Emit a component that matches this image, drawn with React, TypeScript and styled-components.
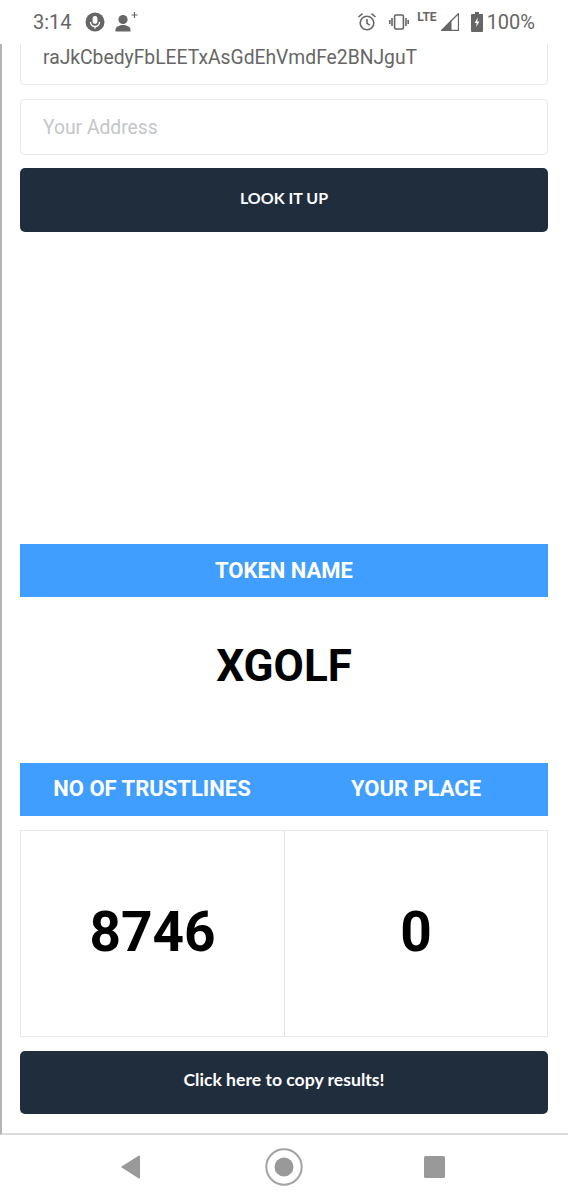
import React from "react";
import styled, { createGlobalStyle } from "styled-components";

const GlobalStyle = createGlobalStyle`
  html, body {
    margin: 0;
    padding: 0;
    background: #fff;
    font-family: Roboto, "Liberation Sans", sans-serif;
  }
  * { box-sizing: border-box; }
`;

const App: React.FC = () => {
  return (
    <Screen>
      <GlobalStyle />
      <StatusBar>
        <StatusGroup>
          <Clock>3:14</Clock>
          <svg width="20" height="20" viewBox="0 0 20 20">
            <circle cx="10" cy="10" r="9.5" fill="#666" />
            <rect x="7.6" y="4" width="4.8" height="8" rx="2.4" fill="#fff" />
            <path d="M5.5 10a4.5 4.5 0 0 0 9 0" fill="none" stroke="#fff" strokeWidth="1.4" />
            <rect x="9.3" y="14" width="1.4" height="2.5" fill="#fff" />
          </svg>
          <svg width="24" height="22" viewBox="0 0 24 22">
            <circle cx="8" cy="8.5" r="4.6" fill="#666" />
            <path d="M0.5 20.5v-2c0-3 4.5-4.6 7.5-4.6s7.5 1.6 7.5 4.6v2z" fill="#666" />
            <path d="M19.5 1v6M16.5 4h6" stroke="#666" strokeWidth="1.2" />
          </svg>
        </StatusGroup>
        <StatusGroup $right>
          <svg width="20" height="20" viewBox="0 0 20 20" fill="none" stroke="#666" strokeWidth="1.6">
            <circle cx="10" cy="11" r="6.8" />
            <path d="M10 7v4.3l2.8 1.9M1.5 5l4-3.4M18.5 5l-4-3.4" />
          </svg>
          <svg width="20" height="16" viewBox="0 0 20 16" fill="none" stroke="#666" strokeWidth="1.6">
            <rect x="5.6" y="1" width="8.8" height="14" rx="1.2" />
            <path d="M3 4v8M17 4v8M0.8 6v4M19.2 6v4" />
          </svg>
          <SignalGroup>
            <LteLabel>LTE</LteLabel>
            <svg width="18" height="18" viewBox="0 0 18 18">
              <path d="M0.5 17.5L17.5 0.5v17z" fill="none" stroke="#666" strokeWidth="1.3" />
              <path d="M0.5 17.5L10.5 7.5v10z" fill="#666" />
            </svg>
          </SignalGroup>
          <svg width="12" height="20" viewBox="0 0 12 20">
            <path d="M4 0h4v2h3a1 1 0 0 1 1 1v16a1 1 0 0 1-1 1H1a1 1 0 0 1-1-1V3a1 1 0 0 1 1-1h3z" fill="#666" />
            <path d="M6.8 5.5L3.6 11h2.1l-.5 4 3.2-5.6H6.3z" fill="#fff" />
          </svg>
          <Battery>100%</Battery>
        </StatusGroup>
      </StatusBar>

      <Viewport>
        <Form>
          <Input value="raJkCbedyFbLEETxAsGdEhVmdFe2BNJguT" readOnly />
          <Input placeholder="Your Address" />
          <LookButton>LOOK IT UP</LookButton>
        </Form>

        <Results>
          <HeaderBar>
            <HeaderCell>TOKEN NAME</HeaderCell>
          </HeaderBar>
          <TokenName>XGOLF</TokenName>
          <HeaderBar>
            <HeaderCell $lift>NO OF TRUSTLINES</HeaderCell>
            <HeaderCell $lift>YOUR PLACE</HeaderCell>
          </HeaderBar>
          <StatsGrid>
            <StatCell>8746</StatCell>
            <StatCell>0</StatCell>
          </StatsGrid>
          <CopyButton>Click here to copy results!</CopyButton>
        </Results>
      </Viewport>

      <NavBar>
        <BackIcon width="20" height="24" viewBox="0 0 20 24">
          <path d="M19 1.5v21a1 1 0 0 1-1.5.8L1 12.8a1 1 0 0 1 0-1.6L17.5.7a1 1 0 0 1 1.5.8z" fill="#999" />
        </BackIcon>
        <svg width="38" height="38" viewBox="0 0 38 38">
          <circle cx="19" cy="19" r="17.7" fill="none" stroke="#a3a3a3" strokeWidth="2" />
          <circle cx="19" cy="19" r="9.5" fill="#999" />
        </svg>
        <RecentsIcon width="21" height="22" viewBox="0 0 21 22">
          <rect width="21" height="22" rx="1.5" fill="#999" />
        </RecentsIcon>
      </NavBar>
    </Screen>
  );
};

export default App;

const Screen = styled.div`
  width: 568px;
  height: 1200px;
  display: flex;
  flex-direction: column;
  background: #fff;
  overflow: hidden;
`;

const StatusBar = styled.div`
  height: 44px;
  flex: none;
  display: flex;
  align-items: center;
  justify-content: space-between;
  padding: 0 33px 0 33px;
  color: #666;
`;

const StatusGroup = styled.div<{ $right?: boolean }>`
  display: flex;
  align-items: center;
  gap: ${(props) => (props.$right ? "12px" : "10px")};
`;

const Clock = styled.span`
  font-size: 20px;
  margin-right: 3px;
`;

const SignalGroup = styled.div`
  display: flex;
  align-items: flex-start;
  gap: 4px;
  margin-left: -4px;
`;

const LteLabel = styled.span`
  font-size: 12px;
  font-weight: 700;
  line-height: 12px;
  margin-top: -2px;
`;

const Battery = styled.span`
  font-size: 20px;
  margin-left: -8px;
`;

const Viewport = styled.div`
  height: 1091px;
  flex: none;
  border-left: 2px solid #b4b4b4;
  border-bottom: 2px solid #dcdcdc;
  padding: 0 20px 0 18px;
  overflow: hidden;
`;

const Form = styled.div`
  display: flex;
  flex-direction: column;
  margin-top: -15px;
`;

const Input = styled.input`
  height: 56px;
  margin-bottom: 14px;
  padding: 0 22px;
  border: 1px solid #e8e8e8;
  border-radius: 5px;
  background: #fff;
  color: #666;
  font-family: Roboto, sans-serif;
  font-size: 19.3px;
  outline: none;

  &::placeholder {
    color: #c4c6ca;
    opacity: 1;
  }
`;

const LookButton = styled.button`
  height: 64px;
  margin-top: -1px;
  padding-bottom: 7px;
  border: none;
  border-radius: 5px;
  background: #202d3d;
  color: #fff;
  font-family: Lato, sans-serif;
  font-size: 16px;
  font-weight: 700;
`;

const Results = styled.div`
  margin-top: 312px;
  display: flex;
  flex-direction: column;
`;

const HeaderBar = styled.div`
  height: 53px;
  display: flex;
  align-items: center;
  background: #3f9eff;
`;

const HeaderCell = styled.div<{ $lift?: boolean }>`
  flex: 1;
  padding-bottom: ${(props) => (props.$lift ? "3px" : "1px")};
  text-align: center;
  color: #fff;
  font-size: 22px;
  font-weight: 700;
`;

const TokenName = styled.div`
  height: 166px;
  padding-bottom: 28px;
  display: flex;
  align-items: center;
  justify-content: center;
  color: #000;
  font-size: 44px;
  font-weight: 700;
`;

const StatsGrid = styled.div`
  height: 207px;
  margin-top: 14px;
  display: grid;
  grid-template-columns: 1fr 1fr;
  border: 1px solid #e8e8e8;
`;

const StatCell = styled.div`
  padding-bottom: 4px;
  display: flex;
  align-items: center;
  justify-content: center;
  color: #000;
  font-size: 55px;
  font-weight: 700;

  & + & {
    border-left: 1.5px solid #e4e4e4;
  }
`;

const CopyButton = styled.button`
  height: 63px;
  margin-top: 14px;
  padding-bottom: 7px;
  border: none;
  border-radius: 5px;
  background: #202d3d;
  color: #fff;
  font-family: Lato, sans-serif;
  font-size: 17.6px;
  font-weight: 700;
`;

const NavBar = styled.div`
  flex: 1;
  display: flex;
  align-items: center;
  justify-content: center;
  gap: 122px;
  padding: 0 3px 2px 0;
`;

const BackIcon = styled.svg`
  margin-right: 2px;
`;

const RecentsIcon = styled.svg`
  margin-left: -1px;
`;
